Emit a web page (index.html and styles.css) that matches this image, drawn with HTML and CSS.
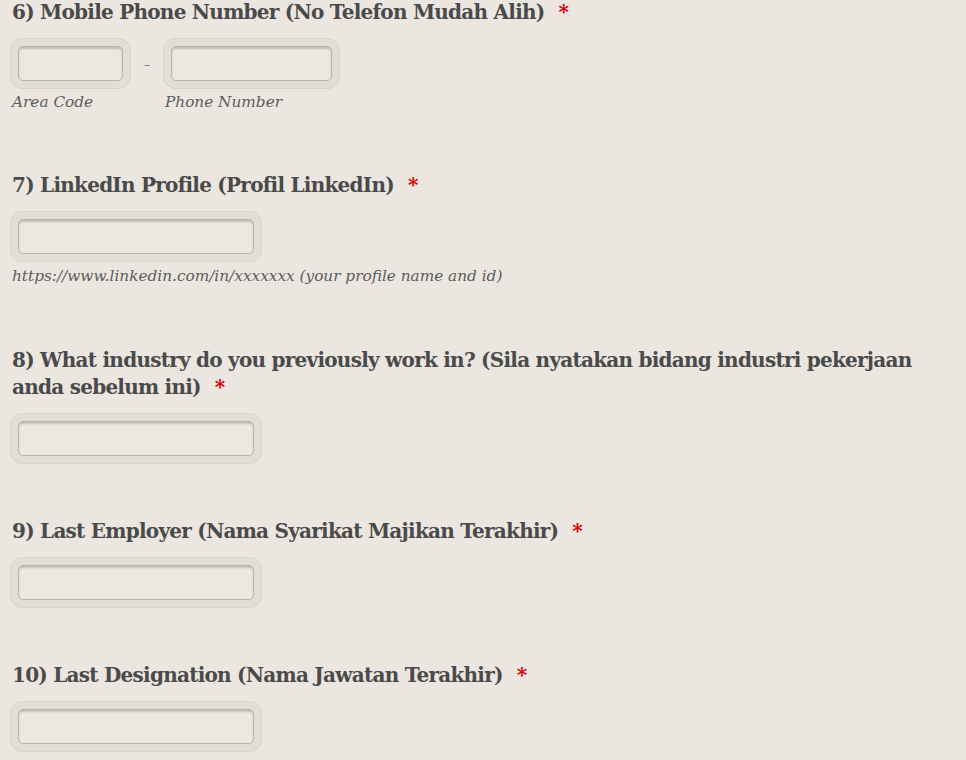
FILE: index.html
```html
<!DOCTYPE html>
<html lang="en">
<head>
  <meta charset="UTF-8">
  <meta name="viewport" content="width=device-width, initial-scale=1.0">
  <title>Application Form</title>
  <link rel="stylesheet" href="styles.css">
</head>
<body>

  <div class="form">

    <div class="question">
      <label class="question-label">6) Mobile Phone Number (No Telefon Mudah Alih)<span class="req">*</span></label>
      <div class="phone-row">
        <div class="phone-part">
          <span class="input-ring"><input type="text" class="area-code"></span>
          <span class="sublabel">Area Code</span>
        </div>
        <span class="dash">&ndash;</span>
        <div class="phone-part">
          <span class="input-ring"><input type="text" class="phone-number"></span>
          <span class="sublabel">Phone Number</span>
        </div>
      </div>
    </div>

    <div class="question">
      <label class="question-label">7) LinkedIn Profile (Profil LinkedIn)<span class="req">*</span></label>
      <span class="input-ring"><input type="text"></span>
      <span class="sublabel hint">https://www.linkedin.com/in/xxxxxxx (your profile name and id)</span>
    </div>

    <div class="question">
      <label class="question-label">8) What industry do you previously work in? (Sila nyatakan bidang industri pekerjaan anda sebelum ini)<span class="req">*</span></label>
      <span class="input-ring"><input type="text"></span>
    </div>

    <div class="question">
      <label class="question-label">9) Last Employer (Nama Syarikat Majikan Terakhir)<span class="req">*</span></label>
      <span class="input-ring"><input type="text"></span>
    </div>

    <div class="question">
      <label class="question-label">10) Last Designation (Nama Jawatan Terakhir)<span class="req">*</span></label>
      <span class="input-ring"><input type="text"></span>
    </div>

  </div>

</body>
</html>
```

FILE: styles.css
```css
body {
  margin: 0;
  background: #ebe7e0;
  font-family: "DejaVu Serif", serif;
  color: #4a4a4a;
}

.form {
  padding: 0 10px;
  margin-top: -1px;
}

.question {
  margin-bottom: 54px;
}

.question-label {
  display: block;
  font-weight: bold;
  font-size: 20px;
  line-height: 27px;
  letter-spacing: -0.75px;
  padding-left: 2px;
  margin-bottom: 12px;
}

.req {
  color: #d40000;
  margin-left: 14px;
}

.input-ring {
  display: inline-block;
  padding: 7px;
  background: #e2ded7;
  border: 1px solid #d8d4cc;
  border-radius: 12px;
}

.input-ring input {
  display: block;
  width: 236px;
  height: 35px;
  box-sizing: border-box;
  border: 1px solid #b8b4ac;
  border-radius: 5px;
  background: #ece8e1;
  box-shadow: inset 0 2px 2px rgba(0,0,0,0.18);
  outline: none;
}

.input-ring input.area-code {
  width: 105px;
}

.input-ring input.phone-number {
  width: 161px;
}

.phone-row {
  display: flex;
  align-items: flex-start;
}

.phone-part {
  display: flex;
  flex-direction: column;
}

.dash {
  width: 32px;
  padding-top: 2px;
  text-align: center;
  line-height: 51px;
  font-size: 12px;
  color: #777;
}

.sublabel {
  display: block;
  font-style: italic;
  font-size: 15.3px;
  line-height: 26px;
  padding-left: 2px;
  margin-bottom: 3px;
  color: #5c5c5c;
}

.sublabel.hint {
  line-height: 28px;
  margin-bottom: 0;
  padding-bottom: 3px;
}
```
